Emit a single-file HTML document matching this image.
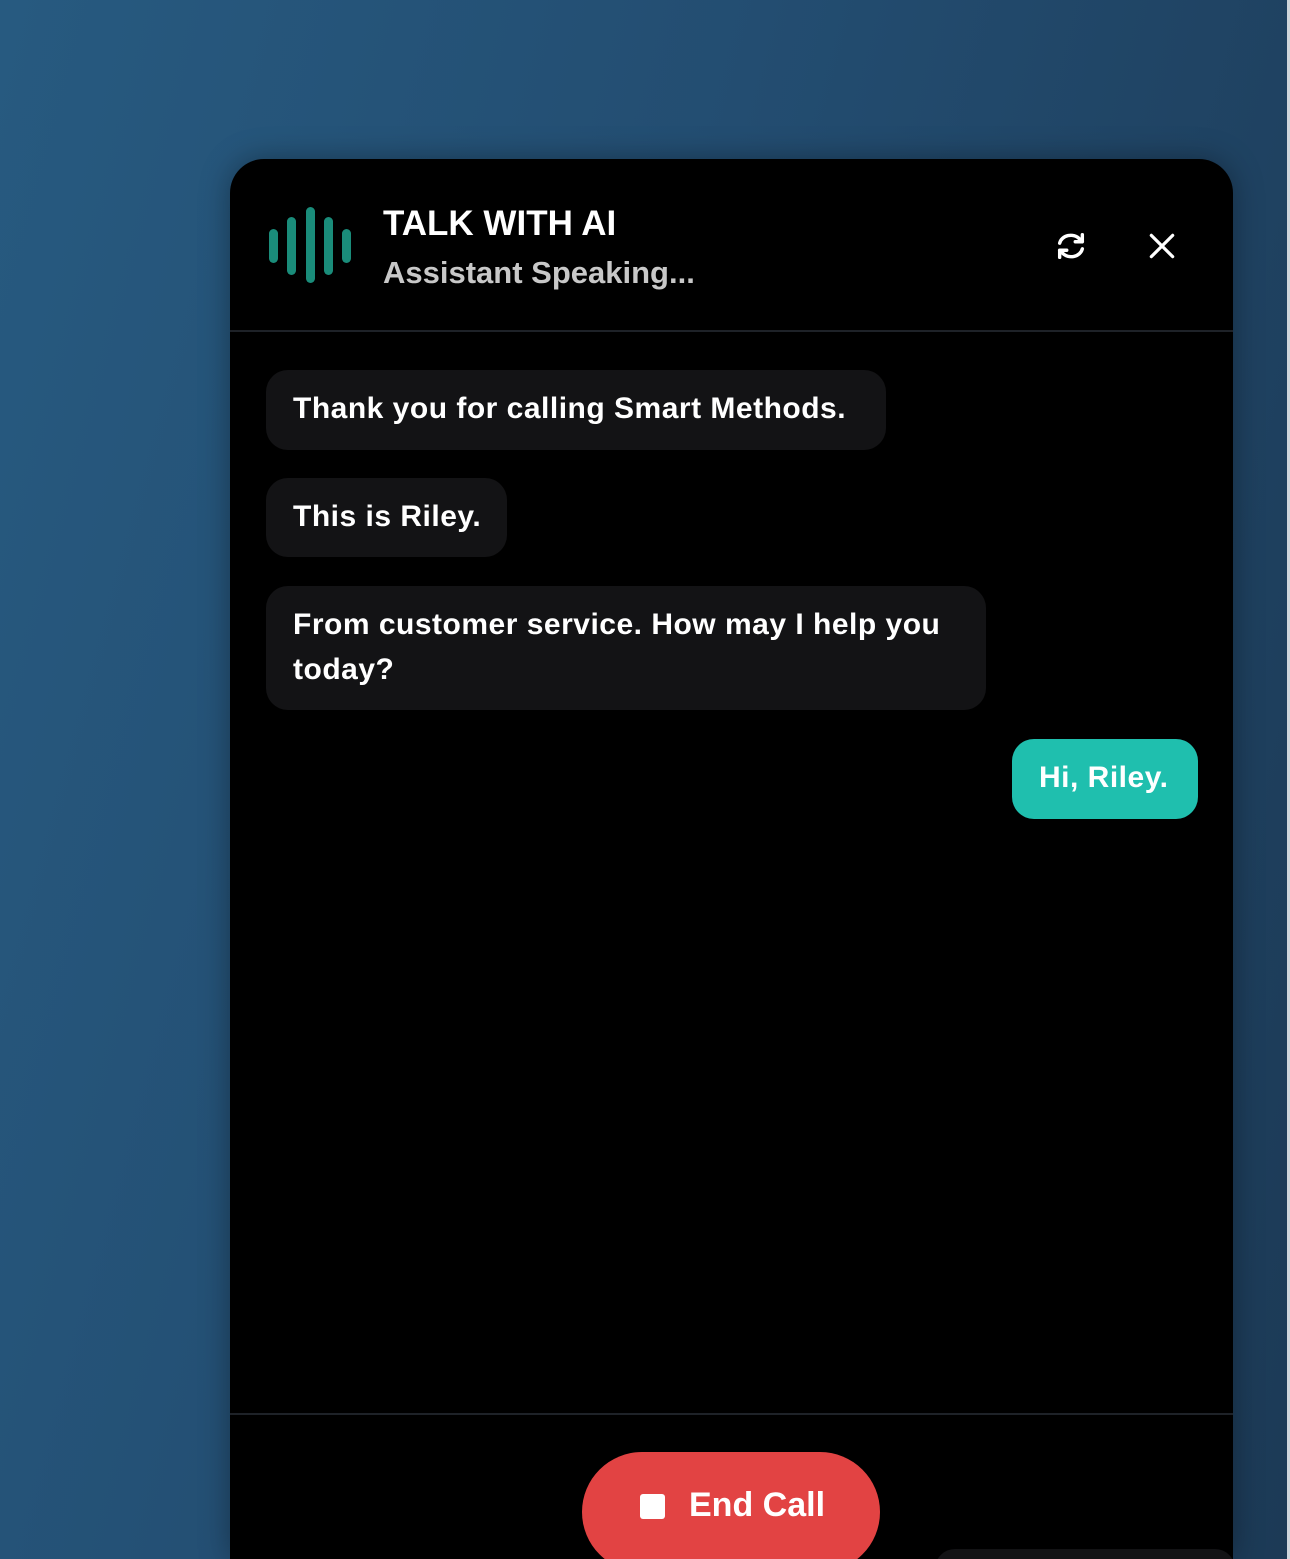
<!DOCTYPE html>
<html><head><meta charset="utf-8"><style>
html,body{margin:0;padding:0;width:1290px;height:1559px;overflow:hidden}
body{position:relative;background:linear-gradient(105deg,#275a80 0%,#234d71 45%,#1c3a56 100%);font-family:"Liberation Sans",sans-serif}
.edge{position:absolute;right:0;top:0;width:3px;height:1559px;background:#cfd6dc}
.panel{position:absolute;left:230px;top:159px;width:1003px;height:1400px;background:#000;border-radius:34px 34px 0 0;box-shadow:0 0 30px rgba(0,0,0,.35);overflow:hidden}
.t{position:absolute;color:#fff;white-space:nowrap}
.m{font-size:30px;font-weight:bold;letter-spacing:0.5px}
.bub{position:absolute;background:#131315;border-radius:22px}
.bar{position:absolute;width:9px;border-radius:5px;background:#1a8c7a}
</style></head><body>
<div class="edge"></div>
<div class="panel">
  <div class="bar" style="left:39px;top:70px;height:34px"></div>
  <div class="bar" style="left:57px;top:58px;height:58px"></div>
  <div class="bar" style="left:76px;top:48px;height:76px"></div>
  <div class="bar" style="left:94px;top:58px;height:58px"></div>
  <div class="bar" style="left:112px;top:70px;height:34px"></div>
  <div class="t" style="left:153px;top:45px;font-size:35px;font-weight:bold">TALK WITH AI</div>
  <div class="t" style="left:153px;top:96px;font-size:31px;font-weight:bold;color:#c8c8c8">Assistant Speaking...</div>
  <svg style="position:absolute;left:824px;top:70px" width="34" height="34" viewBox="0 0 24 24" fill="none" stroke="#fff" stroke-width="2.4" stroke-linecap="round" stroke-linejoin="round"><path d="M4 10a8 7 0 0 1 14-3l2 2M20 4v5h-5"/><path d="M20 14a8 7 0 0 1-14 3l-2-2M4 20v-5h5"/></svg>
  <svg style="position:absolute;left:916px;top:71px" width="32" height="32" viewBox="0 0 24 24" stroke="#fff" stroke-width="2.4" stroke-linecap="round"><path d="M4 4l16 16M20 4L4 20"/></svg>
  <div style="position:absolute;left:0;top:171px;width:1003px;height:2px;background:#1e2228"></div>
  <div class="bub" style="left:36px;top:211px;width:620px;height:80px"></div>
  <div class="t m" style="left:63px;top:233px">Thank you for calling Smart Methods.</div>
  <div class="bub" style="left:36px;top:319px;width:241px;height:79px"></div>
  <div class="t m" style="left:63px;top:341px">This is Riley.</div>
  <div class="bub" style="left:36px;top:427px;width:720px;height:124px"></div>
  <div class="t m" style="left:63px;top:449px">From customer service. How may I help you</div>
  <div class="t m" style="left:63px;top:494px">today?</div>
  <div style="position:absolute;left:782px;top:580px;width:186px;height:80px;background:#1fbfae;border-radius:22px"></div>
  <div class="t m" style="left:809px;top:602px">Hi, Riley.</div>
  <div style="position:absolute;left:0;top:1254px;width:1003px;height:2px;background:#1e2228"></div>
  <div style="position:absolute;left:352px;top:1293px;width:298px;height:120px;background:#e24343;border-radius:60px"></div>
  <div style="position:absolute;left:410px;top:1335px;width:25px;height:25px;background:#fff;border-radius:3px"></div>
  <div class="t" style="left:459px;top:1327px;font-size:34px;font-weight:bold">End Call</div>
  <div style="position:absolute;left:705px;top:1390px;width:300px;height:40px;background:#131315;border-radius:20px"></div>
</div>
</body></html>
